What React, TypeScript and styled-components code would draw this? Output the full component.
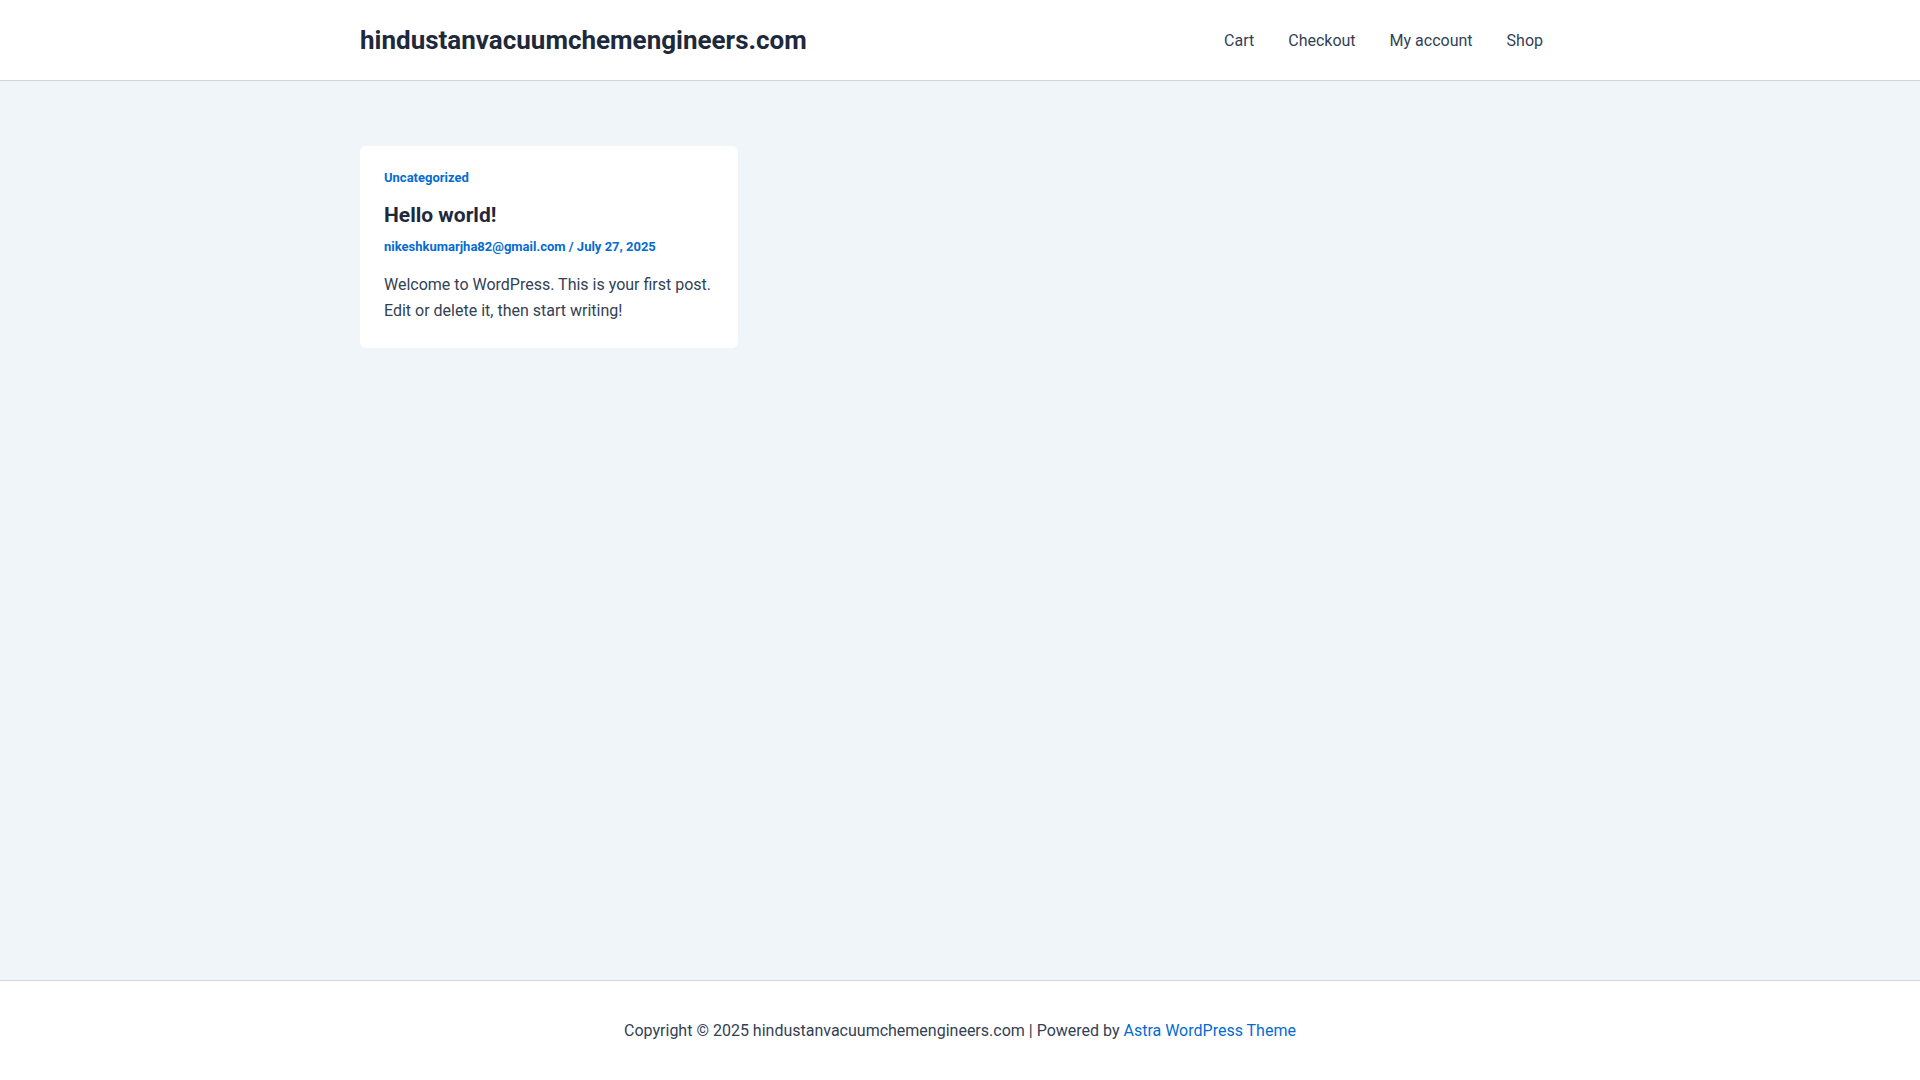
import React from "react"
import styled, { createGlobalStyle } from "styled-components"

const Global = createGlobalStyle`
  html, body { margin: 0; padding: 0; }
  body { font-family: Roboto, "Liberation Sans", sans-serif; background: #f0f5fa; color: #334155; }
  a { text-decoration: none; }
`

const Page = styled.div`
  min-height: 1080px;
  display: flex;
  flex-direction: column;
`
const Header = styled.header`
  background: #fff;
  border-bottom: 1px solid #d1d5db;
  height: 80px;
`
const Container = styled.div`
  width: 1200px;
  margin: 0 auto;
  height: 100%;
  display: flex;
  align-items: center;
  justify-content: space-between;
`
const Logo = styled.a`
  font-size: 26px;
  font-weight: 700;
  color: #1e293b;
`
const Nav = styled.nav`
  display: flex;
  margin-right: 14px;
`
const NavLink = styled.a`
  font-size: 16px;
  color: #334155;
  padding: 0 17px;
  &:last-child { padding-right: 3px; }
`
const Main = styled.main`
  flex: 1;
  padding-top: 65px;
`
const Inner = styled.div`
  width: 1200px;
  margin: 0 auto;
`
const Card = styled.article`
  width: 330px;
  background: #fff;
  border-radius: 6px;
  padding: 24px;
`
const Cat = styled.a`
  display: block;
  font-size: 13px;
  font-weight: 700;
  color: #046bd2;
  margin-bottom: 18px;
`
const Title = styled.h2`
  margin: 0 0 12px;
  font-size: 21px;
  font-weight: 700;
  color: #1e293b;
`
const Meta = styled.div`
  font-size: 13px;
  font-weight: 700;
  color: #046bd2;
  margin-bottom: 18px;
`
const Excerpt = styled.p`
  margin: 0;
  font-size: 16px;
  line-height: 26px;
  color: #334155;
`
const Footer = styled.footer`
  background: #fff;
  border-top: 1px solid #d1d5db;
  height: 99px;
  display: flex;
  align-items: center;
  justify-content: center;
  font-size: 16px;
  color: #334155;
`
const FootLink = styled.a`
  color: #046bd2;
`

export default function App() {
  return (
    <Page>
      <Global />
      <Header>
        <Container>
          <Logo href="#">hindustanvacuumchemengineers.com</Logo>
          <Nav>
            <NavLink href="#">Cart</NavLink>
            <NavLink href="#">Checkout</NavLink>
            <NavLink href="#">My account</NavLink>
            <NavLink href="#">Shop</NavLink>
          </Nav>
        </Container>
      </Header>
      <Main>
        <Inner>
          <Card>
            <Cat href="#">Uncategorized</Cat>
            <Title>Hello world!</Title>
            <Meta>nikeshkumarjha82@gmail.com / July 27, 2025</Meta>
            <Excerpt>Welcome to WordPress. This is your first post. Edit or delete it, then start writing!</Excerpt>
          </Card>
        </Inner>
      </Main>
      <Footer>
        <span>
          Copyright © 2025 hindustanvacuumchemengineers.com | Powered by{" "}
          <FootLink href="#">Astra WordPress Theme</FootLink>
        </span>
      </Footer>
    </Page>
  )
}
